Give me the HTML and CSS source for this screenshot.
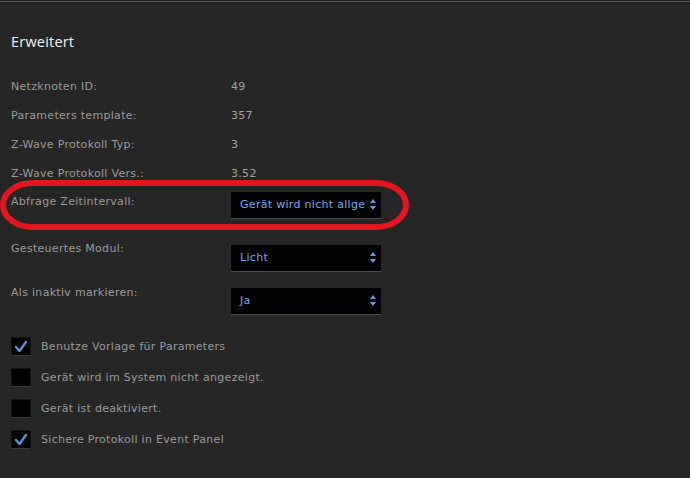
FILE: index.html
```html
<!DOCTYPE html>
<html lang="de">
<head>
<meta charset="utf-8">
<title>Erweitert</title>
<link rel="stylesheet" href="styles.css">
</head>
<body>
<div class="topline"></div>
<main class="panel">
  <h2 class="title">Erweitert</h2>

  <div class="info">
    <div class="row"><span class="label">Netzknoten ID:</span><span class="value">49</span></div>
    <div class="row"><span class="label">Parameters template:</span><span class="value">357</span></div>
    <div class="row"><span class="label">Z-Wave Protokoll Typ:</span><span class="value">3</span></div>
    <div class="row"><span class="label">Z-Wave Protokoll Vers.:</span><span class="value">3.52</span></div>
  </div>

  <div class="selrow selrow-a">
    <span class="label">Abfrage Zeitintervall:</span>
    <div class="select"><span class="seltext">Gerät wird nicht allge</span><span class="arrows"></span></div>
  </div>
  <div class="selrow selrow-b">
    <span class="label">Gesteuertes Modul:</span>
    <div class="select"><span class="seltext">Licht</span><span class="arrows"></span></div>
  </div>
  <div class="selrow selrow-c">
    <span class="label">Als inaktiv markieren:</span>
    <div class="select"><span class="seltext">Ja</span><span class="arrows"></span></div>
  </div>

  <ul class="checks">
    <li class="check"><span class="box"><svg viewBox="0 0 20 19" width="20" height="19"><path d="M5 10 L8.5 14 L15 5" fill="none" stroke="#5b90d6" stroke-width="2.4" stroke-linecap="round" stroke-linejoin="round"/></svg></span><span class="clabel">Benutze Vorlage für Parameters</span></li>
    <li class="check"><span class="box"></span><span class="clabel">Gerät wird im System nicht angezeigt.</span></li>
    <li class="check"><span class="box"></span><span class="clabel">Gerät ist deaktiviert.</span></li>
    <li class="check"><span class="box"><svg viewBox="0 0 20 19" width="20" height="19"><path d="M5 10 L8.5 14 L15 5" fill="none" stroke="#5b90d6" stroke-width="2.4" stroke-linecap="round" stroke-linejoin="round"/></svg></span><span class="clabel">Sichere Protokoll in Event Panel</span></li>
  </ul>

  <svg class="annotation" width="412" height="56" viewBox="0 0 412 56">
    <rect x="3" y="5" width="403" height="44" rx="30" ry="22" fill="none" stroke="#e3161f" stroke-width="6"/>
  </svg>
</main>
</body>
</html>
```

FILE: styles.css
```css
* { box-sizing: border-box; }
html, body {
  margin: 0;
  padding: 0;
  background: #262626;
}
body {
  width: 690px;
  height: 478px;
  overflow: hidden;
  font-family: "DejaVu Sans", Verdana, sans-serif;
  font-size: 11px;
  letter-spacing: 0.3px;
  color: #9b9b9b;
}
.topline {
  height: 5px;
  border-top: 1px solid #1d1d1d;
  background: linear-gradient(#5a5a5a 0 1px, #222 1px);
}
.panel {
  position: relative;
  padding: 27px 0 0 11px;
}
.title {
  margin: 0;
  font-family: "Open Sans", "DejaVu Sans", sans-serif;
  font-weight: 400;
  font-size: 14.5px;
  line-height: 20px;
  color: #f2f2f2;
  letter-spacing: 0.2px;
}
.info {
  margin-top: 20px;
}
.row {
  display: flex;
  height: 29px;
  align-items: center;
}
.label {
  width: 220px;
  flex: none;
  line-height: 14px;
  color: #9a9a9a;
}
.value {
  color: #a3a3a3;
}
.selrow {
  display: flex;
  align-items: flex-start;
}
.selrow-a { margin-top: 4px; }
.selrow-a .label { margin-top: 3px; }
.selrow-b { margin-top: 23px; }
.selrow-b .select { margin-top: 3px; }
.selrow-c { margin-top: 14px; }
.selrow-c .select { margin-top: 2px; }

.select {
  position: relative;
  width: 150px;
  height: 27px;
  background: #030306;
  border-bottom: 1px solid #4a4a4a;
  display: flex;
  align-items: center;
  padding: 0 18px 0 9px;
  overflow: hidden;
}
.seltext {
  white-space: nowrap;
  color: #7ba4e6;
  font-size: 11px;
  line-height: 14px;
}
.arrows {
  position: absolute;
  right: 5px;
  top: 50%;
  width: 6px;
  height: 11px;
  margin-top: -6px;
}
.arrows::before,
.arrows::after {
  content: "";
  position: absolute;
  left: 0;
  border-left: 3px solid transparent;
  border-right: 3px solid transparent;
}
.arrows::before {
  top: 0;
  border-bottom: 4px solid #6f9ad8;
}
.arrows::after {
  bottom: 0;
  border-top: 4px solid #6f9ad8;
}

.checks {
  list-style: none;
  margin: 16px 0 0 0;
  padding: 0;
}
.check {
  display: flex;
  align-items: center;
  height: 31px;
}
.box {
  width: 20px;
  height: 19px;
  flex: none;
  background: #020204;
  border: 1px solid #141414;
  border-bottom-color: #3a3a3a;
  display: flex;
  align-items: center;
  justify-content: center;
}
.box svg {
  display: block;
  margin: -1px;
}
.clabel {
  margin-left: 10px;
  color: #9a9a9a;
  line-height: 14px;
}
.annotation {
  position: absolute;
  left: 0;
  top: 173px;
  pointer-events: none;
}
```
